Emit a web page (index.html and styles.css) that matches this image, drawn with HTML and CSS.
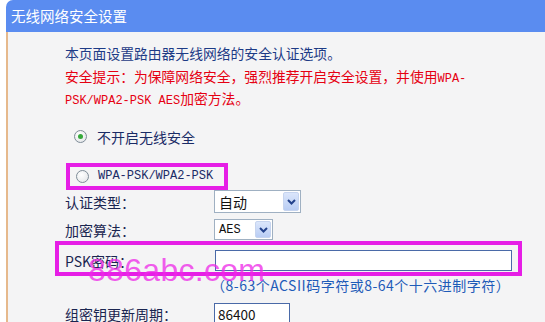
FILE: index.html
```html
<!DOCTYPE html>
<html lang="zh-CN">
<head>
<meta charset="utf-8">
<title>无线网络安全设置</title>
<link rel="stylesheet" href="styles.css">
</head>
<body>
<div class="panel">
  <div class="header">无线网络安全设置</div>
  <div class="body">
    <div class="intro">
      <div class="line navy">本页面设置路由器无线网络的安全认证选项。</div>
      <div class="line red">安全提示：为保障网络安全，强烈推荐开启安全设置，并使用<span class="lat">WPA-</span></div>
      <div class="line red"><span class="lat">PSK/WPA2-PSK AES</span>加密方法。</div>
    </div>
    <div class="radio-row">
      <span class="radio checked"></span>
      <span class="opt">不开启无线安全</span>
    </div>
    <div class="box box1">
      <span class="radio"></span>
      <span class="opt lat">WPA-PSK/WPA2-PSK</span>
    </div>
    <div class="row row-auth">
      <span class="label">认证类型：</span>
      <span class="select sel-auto"><span class="sel-text">自动</span><span class="arrow"><svg width="9" height="6" viewBox="0 0 9 6"><path d="M1 1 L4.5 4.5 L8 1" fill="none" stroke="#23428c" stroke-width="2"/></svg></span></span>
    </div>
    <div class="row row-enc">
      <span class="label">加密算法：</span>
      <span class="select sel-aes"><span class="sel-text lat">AES</span><span class="arrow"><svg width="9" height="6" viewBox="0 0 9 6"><path d="M1 1 L4.5 4.5 L8 1" fill="none" stroke="#23428c" stroke-width="2"/></svg></span></span>
    </div>
    <div class="box box2">
      <span class="label">PSK密码：</span>
      <span class="input input-psk"></span>
    </div>
    <div class="hint">（8-63个ACSII码字符或8-64个十六进制字符）</div>
    <div class="row row-period">
      <span class="label">组密钥更新周期：</span>
      <span class="input input-period">86400</span>
    </div>
    <div class="watermark">886abc.com</div>
  </div>
</div>
</body>
</html>
```
FILE: styles.css
```css
html, body {
  margin: 0;
  padding: 0;
  background: #ffffff;
}
body {
  width: 545px;
  height: 322px;
  overflow: hidden;
  font-family: "Noto Sans CJK SC", sans-serif;
  font-size: 14px;
}
.panel {
  margin-left: 6px;
  height: 322px;
  display: flex;
  flex-direction: column;
}
.header {
  height: 32px;
  flex: none;
  background: #5a8cf0;
  border-top-left-radius: 7px;
  color: #ffffff;
  font-size: 14.5px;
  line-height: 32px;
  padding-left: 5px;
  box-sizing: border-box;
}
.body {
  position: relative;
  flex: 1;
  background: #f4f4f5;
  border-left: 2px solid #e6b98c;
  padding-left: 57px;
  overflow: hidden;
}
.intro {
  margin-top: 10px;
  font-size: 13.8px;
}
.line {
  height: 22.5px;
  line-height: 22.5px;
  white-space: nowrap;
}
.navy { color: #1d3b86; }
.red { color: #e60012; }
.lat {
  font-family: "Liberation Mono", monospace;
  font-size: 12px;
}
.line .lat { vertical-align: baseline; }
.radio-row {
  margin-top: 16px;
  height: 22px;
  display: flex;
  align-items: center;
  padding-left: 9px;
}
.radio {
  width: 11px;
  height: 11px;
  border: 1px solid #7f8c98;
  border-radius: 50%;
  background: radial-gradient(circle at 40% 35%, #ffffff 0%, #e6e8ea 80%);
  display: inline-flex;
  align-items: center;
  justify-content: center;
  flex: none;
}
.radio.checked::after {
  content: "";
  width: 5px;
  height: 5px;
  border-radius: 50%;
  background: #35a83a;
}
.opt {
  margin-left: 10px;
  color: #1a2b66;
}
.box {
  border: 4px solid #e61ee6;
  box-sizing: border-box;
  display: flex;
  align-items: center;
  flex: none;
}
.box1 {
  margin-top: 15px;
  margin-left: 1px;
  width: 162px;
  height: 27px;
  padding-left: 6px;
}
.box1 .opt { margin-left: 9px; }
.row {
  display: flex;
  align-items: center;
  flex: none;
}
.label {
  width: 149px;
  flex: none;
  color: #1a2550;
}
.row-auth { height: 24px; }
.row-enc { height: 22px; margin-top: 5px; }
.select {
  box-sizing: border-box;
  border: 1px solid #9fb0c2;
  background: #ffffff;
  display: flex;
  align-items: center;
  justify-content: space-between;
  padding: 1px 1px 1px 4px;
  color: #111;
}
.sel-auto { width: 87px; height: 23px; }
.sel-aes { width: 59px; height: 21px; }
.sel-text { line-height: 1; }
.arrow {
  width: 16px;
  height: 100%;
  box-sizing: border-box;
  background: linear-gradient(#dbe6fb, #b9cdf4);
  border: 1px solid #c6d4ef;
  border-radius: 2px;
  display: flex;
  align-items: center;
  justify-content: center;
}
.box2 {
  margin-left: -10px;
  width: 467px;
  height: 35px;
  padding: 5px 0 1px 6px;
}
.box2 .label { width: 150px; padding-top: 2px; }
.input {
  box-sizing: border-box;
  border: 1px solid #4a6aa8;
  background: #ffffff;
  display: flex;
  align-items: center;
  padding-left: 3px;
  font-size: 13.5px;
  color: #111;
}
.input-psk { width: 297px; height: 21px; }
.input-period { width: 76px; height: 22px; }
.hint {
  margin-left: 146px;
  height: 18px;
  line-height: 18px;
  color: #1e5bb8;
  font-size: 14px;
  letter-spacing: 0.5px;
  white-space: nowrap;
  flex: none;
}
.row-period { margin-top: 9px; height: 22px; }
.watermark {
  position: absolute;
  left: 80px;
  top: 222px;
  font-family: "Liberation Sans", Arial, sans-serif;
  font-size: 32px;
  line-height: 32px;
  color: rgba(238, 40, 232, 0.75);
  letter-spacing: 0.3px;
}
```
